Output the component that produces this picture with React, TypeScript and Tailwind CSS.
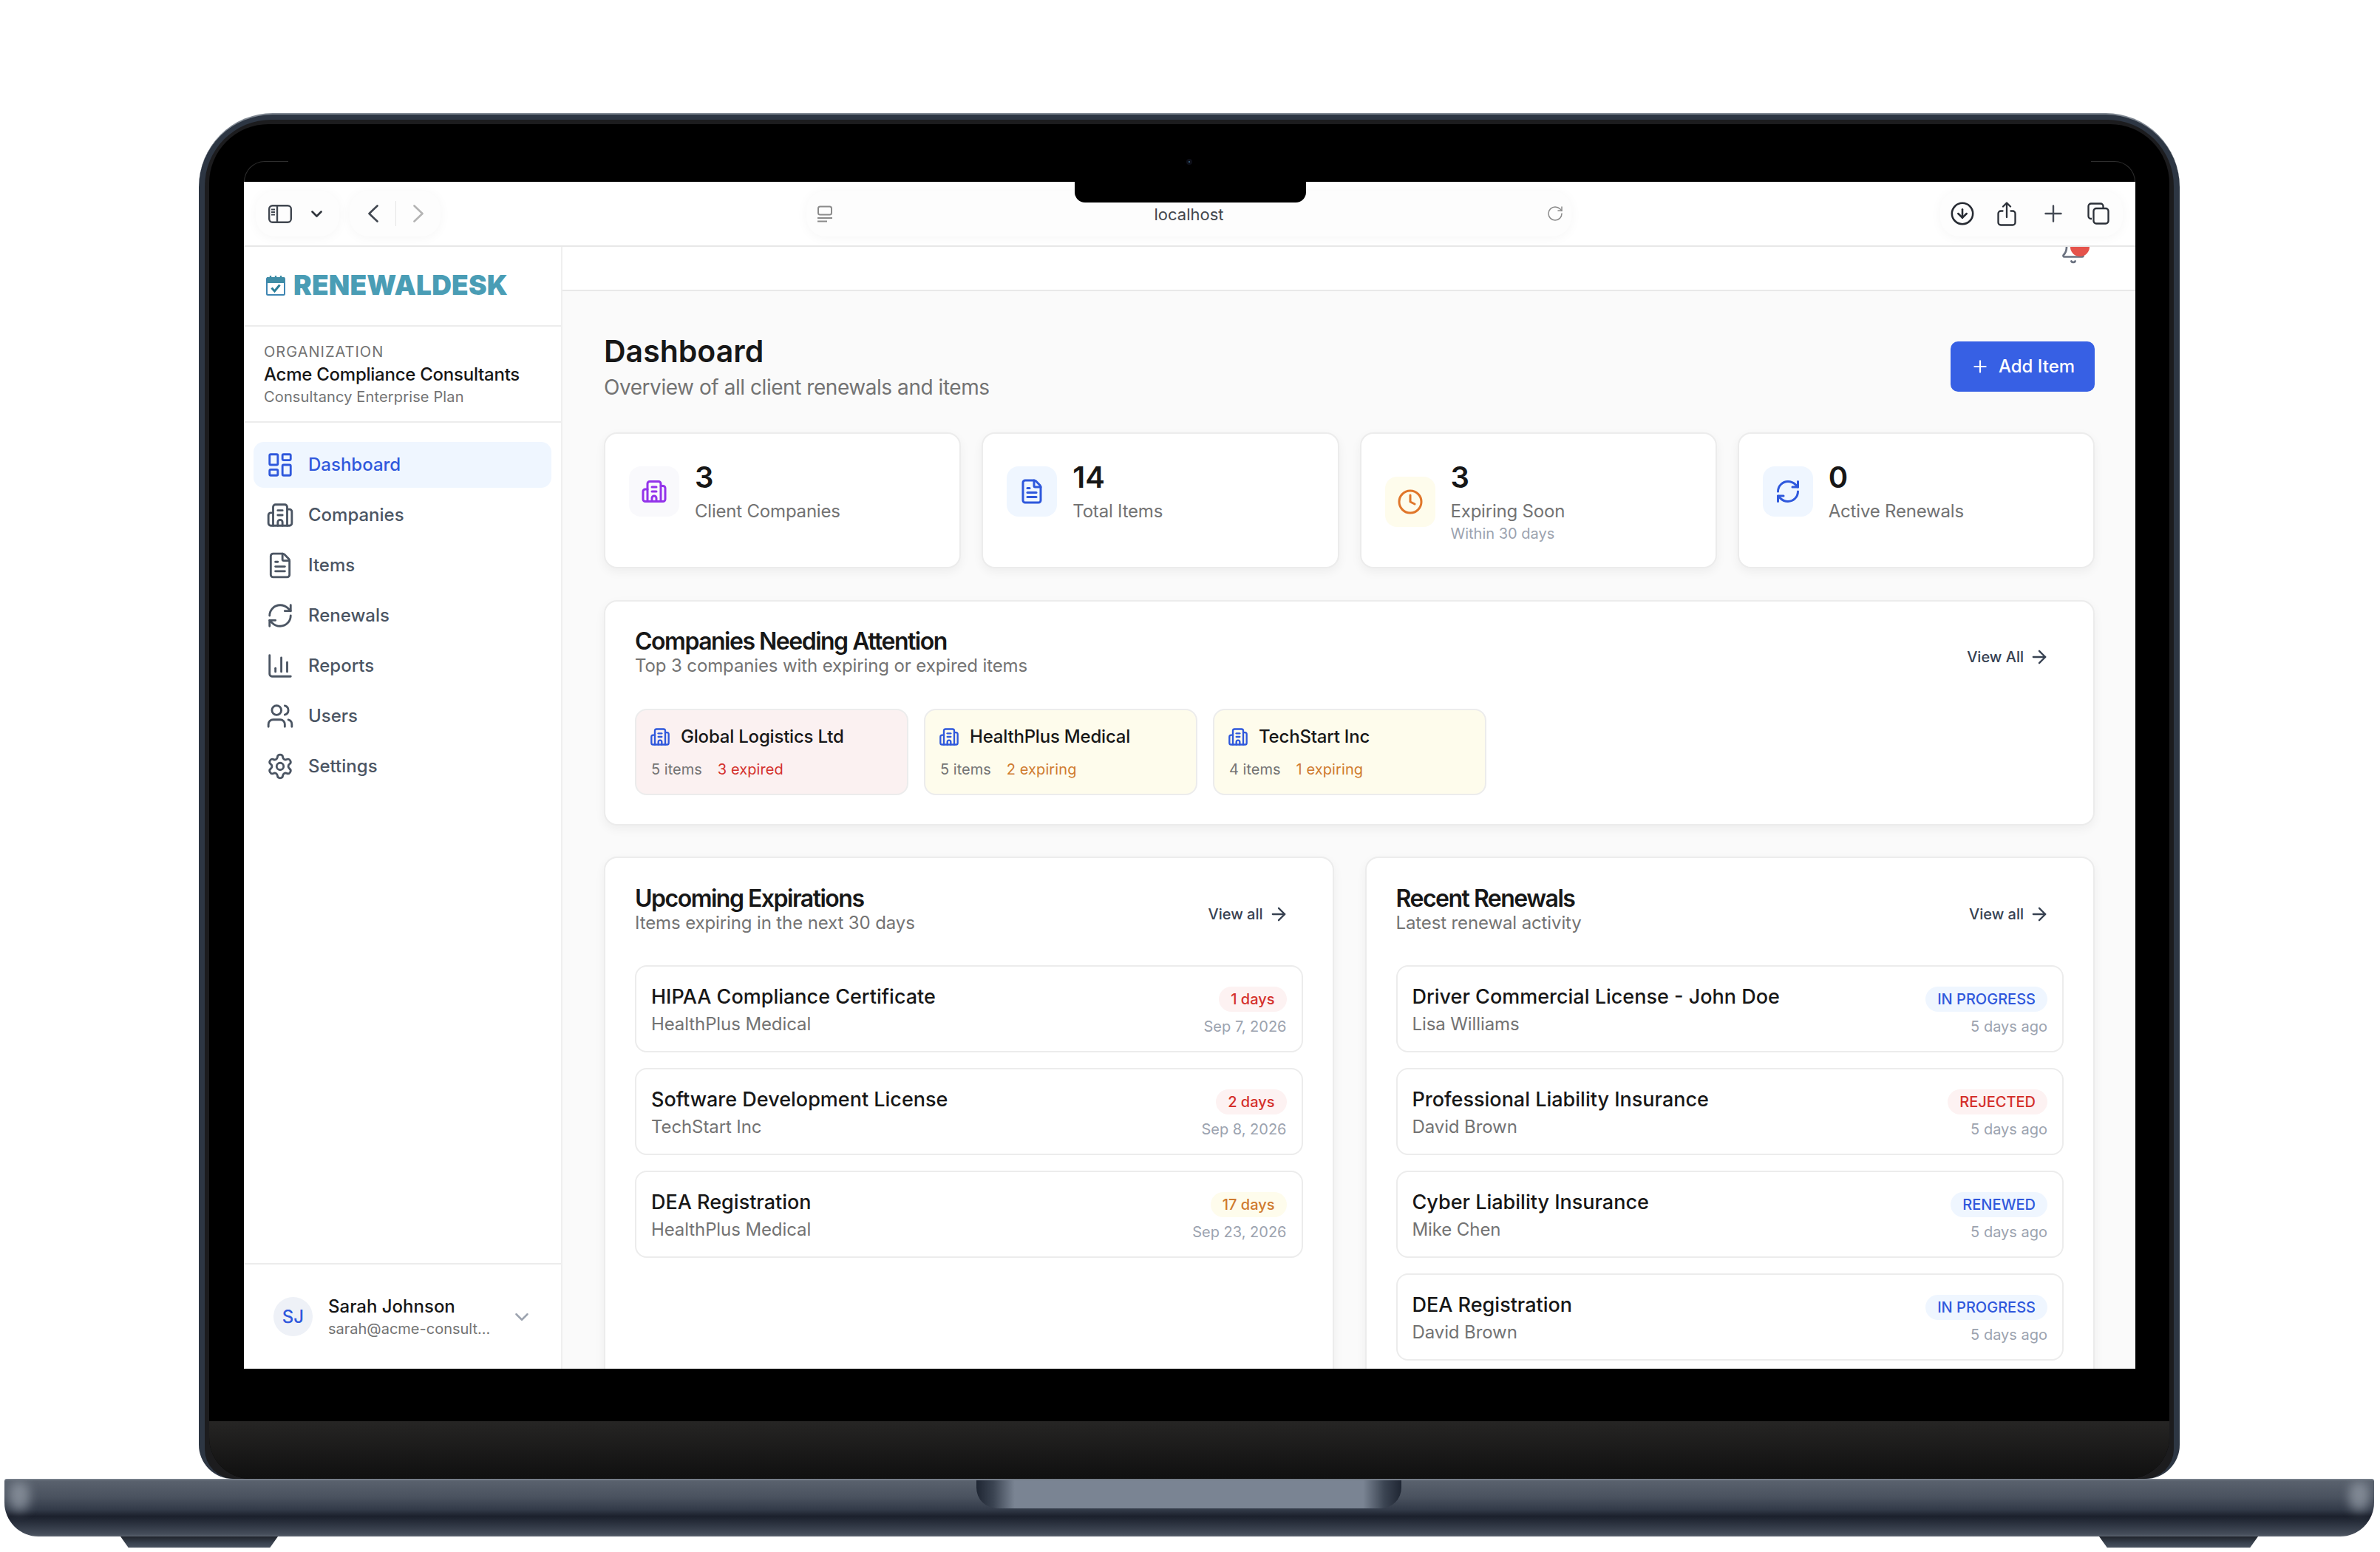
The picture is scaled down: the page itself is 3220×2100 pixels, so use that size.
import React from "react";
import {
  ArrowRight,
  Bell,
  Building2,
  ChartColumn,
  ChevronDown,
  CircleArrowDown,
  Clock,
  FileText,
  LayoutDashboard,
  Plus,
  RefreshCw,
  RotateCw,
  Settings,
  Users,
} from "lucide-react";

const nav = [
  { label: "Dashboard", Icon: LayoutDashboard, active: true },
  { label: "Companies", Icon: Building2 },
  { label: "Items", Icon: FileText },
  { label: "Renewals", Icon: RefreshCw },
  { label: "Reports", Icon: ChartColumn },
  { label: "Users", Icon: Users },
  { label: "Settings", Icon: Settings },
];

const upcoming = [
  { t: "HIPAA Compliance Certificate", s: "HealthPlus Medical", b: "1 days", d: "Sep 7, 2026", c: "red" },
  { t: "Software Development License", s: "TechStart Inc", b: "2 days", d: "Sep 8, 2026", c: "red" },
  { t: "DEA Registration", s: "HealthPlus Medical", b: "17 days", d: "Sep 23, 2026", c: "amber" },
];

const renewals = [
  { t: "Driver Commercial License - John Doe", s: "Lisa Williams", b: "IN PROGRESS", d: "5 days ago", c: "blue" },
  { t: "Professional Liability Insurance", s: "David Brown", b: "REJECTED", d: "5 days ago", c: "red" },
  { t: "Cyber Liability Insurance", s: "Mike Chen", b: "RENEWED", d: "5 days ago", c: "blue" },
  { t: "DEA Registration", s: "David Brown", b: "IN PROGRESS", d: "5 days ago", c: "blue" },
];

const badgeClass: Record<string, string> = {
  red: "bg-[#fdf2f2] text-[#d4302b]",
  amber: "bg-[#fefcec] text-[#cf7a2e]",
  blue: "bg-[#eff6ff] text-[#2f58dc]",
};

function Card({ children, className = "" }: { children: React.ReactNode; className?: string }) {
  return (
    <div className={"bg-white border-2 border-[#ececec] rounded-[18px] shadow-[0_5px_14px_rgba(0,0,0,0.05)] " + className}>
      {children}
    </div>
  );
}

function SectionHead({ title, sub, link }: { title: string; sub: string; link: string }) {
  return (
    <div className="flex items-center justify-between">
      <div>
        <div className="text-[32px] leading-[35px] font-semibold tracking-[-1.5px] text-[#171717]">{title}</div>
        <div className="text-[24px] leading-[32px] tracking-[-0.12px] text-[#737373]">{sub}</div>
      </div>
      <div className="flex items-center gap-[7px] pr-[19px] pt-[10px] text-[20px] font-medium text-[#374151]">
        <span>{link}</span>
        <ArrowRight className="w-[28px] h-[28px]" />
      </div>
    </div>
  );
}

function Row({ r }: { r: { t: string; s: string; b: string; d: string; c: string } }) {
  return (
    <div className="h-[118px] border-2 border-[#ececec] rounded-[16px] bg-white px-[20px] pt-[23px] flex items-start justify-between shrink-0">
      <div>
        <div className="text-[27px] leading-[36px] font-medium text-[#171717]">{r.t}</div>
        <div className="mt-[3px] text-[24px] leading-[32px] tracking-[-0.1px] text-[#737373]">{r.s}</div>
      </div>
      <div className="pt-[4px] flex flex-col items-end">
        <div className={"h-[34px] px-[16px] rounded-full text-[20px] leading-[34px] font-medium " + badgeClass[r.c]}>{r.b}</div>
        <div className="mt-[6px] text-[20px] leading-[28px] text-[#9ca3af]">{r.d}</div>
      </div>
    </div>
  );
}

function Stat({ n, label, sub, Icon, box, color }: { n: string; label: string; sub?: string; Icon: any; box: string; color: string }) {
  return (
    <Card className="pt-[35px] px-[32px] pb-[31px] flex items-center gap-[21px] self-stretch">
      <div className="self-start flex w-full items-center gap-[21px]">
        <div className={"w-[68px] h-[68px] rounded-[16px] flex items-center justify-center shrink-0 " + box}>
          <Icon className={"w-[36px] h-[36px] " + color} />
        </div>
        <div>
          <div className="text-[40px] leading-[48px] font-semibold text-[#171717]">{n}</div>
          <div className="mt-[6px] text-[24px] leading-[32px] tracking-[-0.2px] text-[#737373]">{label}</div>
          {sub && <div className="text-[20px] leading-[28px] text-[#9ca3af]">{sub}</div>}
        </div>
      </div>
    </Card>
  );
}

function Chip({ name, items, alert, bg, color }: { name: string; items: string; alert: string; bg: string; color: string }) {
  return (
    <div className={"w-[370px] border-2 border-[#ececec] rounded-[16px] p-[20px] pb-[19px] " + bg}>
      <div className="flex items-center gap-[14px] -ml-[2px] text-[24px] leading-[32px] tracking-[-0.2px] font-medium text-[#171717]">
        <Building2 className="w-[28px] h-[28px] text-[#2f58dc]" />
        <span>{name}</span>
      </div>
      <div className="mt-[14px] flex gap-[21px] text-[20px] leading-[28px]">
        <span className="text-[#737373]">{items}</span>
        <span className={"tracking-[0.1px] " + color}>{alert}</span>
      </div>
    </div>
  );
}

function Toolbar() {
  const pill = "h-[62px] rounded-[26px] bg-[#fdfdfd] shadow-[0_2px_16px_rgba(0,0,0,0.04)] flex items-center";
  return (
    <div className="h-[88px] shrink-0 bg-white border-b-2 border-[#e8e8e8] pl-[16px] pr-[17px] flex items-center justify-between">
      <div className="flex gap-[14px]">
        <div className={pill + " w-[113px] pl-[17px] gap-[26px]"}>
          <svg width="32" height="25" viewBox="0 0 32 25" fill="none" stroke="#414750" strokeWidth="2.4">
            <rect x="1.2" y="1.2" width="29.6" height="22.6" rx="4.5" />
            <path d="M12 1.2v22.6" />
            <path d="M4 6.5h5M4 10h5M4 13.5h5" strokeWidth="1.8" />
          </svg>
          <svg width="15" height="9" viewBox="0 0 15 9" fill="none" stroke="#30353c" strokeWidth="2.6" strokeLinecap="round" strokeLinejoin="round">
            <path d="M1.5 1.5 7.5 7.5 13.5 1.5" />
          </svg>
        </div>
        <div className={pill + " w-[123px] pl-[25px]"}>
          <svg width="14" height="24" viewBox="0 0 14 24" fill="none" stroke="#414750" strokeWidth="2.6" strokeLinecap="round" strokeLinejoin="round">
            <path d="M12.5 1.5 1.5 12l11 10.5" />
          </svg>
          <div className="w-[1px] h-[34px] bg-[#e6e6e6] mx-[23px]" />
          <svg width="14" height="24" viewBox="0 0 14 24" fill="none" stroke="#b4b4b4" strokeWidth="2.6" strokeLinecap="round" strokeLinejoin="round">
            <path d="M1.5 1.5 12.5 12 1.5 22.5" />
          </svg>
        </div>
      </div>
      <div className={pill + " w-[1035px] mr-[4px] px-[14px] grid grid-cols-[1fr_auto_1fr]"}>
        <svg width="22" height="23" viewBox="0 0 22 23" fill="none" stroke="#8a8a8a" strokeWidth="2">
          <rect x="2" y="1.5" width="18" height="11" rx="2.5" />
          <path d="M1 17h20M1 21.5h13" />
        </svg>
        <span className="mt-[1px] text-[22px] leading-[28px] text-[#44474d]">localhost</span>
        <RotateCw className="justify-self-end w-[24px] h-[24px] text-[#8a8a8a] -mr-[4px]" strokeWidth={1.5} />
      </div>
      <div className={pill + " w-[247px] pl-[13px]"}>
        <CircleArrowDown className="w-[34px] h-[34px] text-[#272b33]" strokeWidth={1.8} />
        <svg className="ml-[30px]" width="26" height="33" viewBox="0 0 26 33" fill="none" stroke="#2b3038" strokeWidth="2.3" strokeLinecap="round" strokeLinejoin="round">
          <path d="M7.5 12.5H5a3.5 3.5 0 0 0-3.5 3.5v12A3.5 3.5 0 0 0 5 31.5h16a3.5 3.5 0 0 0 3.5-3.5V16a3.5 3.5 0 0 0-3.5-3.5h-2.5" />
          <path d="M13 21V2M8 6.5l5-5 5 5" />
        </svg>
        <svg className="ml-[38px]" width="24" height="24" viewBox="0 0 24 24" fill="none" stroke="#454b55" strokeWidth="2.4" strokeLinecap="round">
          <path d="M12 1.5v21M1.5 12h21" />
        </svg>
        <svg className="ml-[34px]" width="30" height="30" viewBox="0 0 30 30" fill="none" stroke="#2b3038" strokeWidth="2.3" strokeLinejoin="round">
          <path d="M6 22h-1a3.5 3.5 0 0 1-3.5-3.5V5A3.5 3.5 0 0 1 5 1.5h13A3.5 3.5 0 0 1 21.5 5v2" />
          <rect x="8.5" y="8" width="20" height="20.5" rx="3.5" />
        </svg>
      </div>
    </div>
  );
}

function Sidebar() {
  return (
    <aside className="w-[431px] shrink-0 bg-white border-r-2 border-[#efefef] flex flex-col">
      <div className="h-[108px] shrink-0 border-b-2 border-[#ececec] pl-[30px] pb-[2px] flex items-center gap-[11px]">
        <svg width="26" height="28" viewBox="0 0 26 28" fill="none">
          <rect x="1" y="4" width="24" height="23" rx="1.5" fill="#fff" stroke="#3f86b3" strokeWidth="2" />
          <rect x="1" y="3" width="24" height="8" fill="#3f8da6" />
          <path d="M6 1v5M13 1v5M20 1v5" stroke="#3f8da6" strokeWidth="2.4" />
          <path d="M7.5 17.5 11.5 22 18.5 13.5" stroke="#2b7f99" strokeWidth="3" />
        </svg>
        <span className="text-[37px] leading-[40px] font-black text-[#4a9db5] tracking-[0.2px]">RENEWALDESK</span>
      </div>
      <div className="shrink-0 border-b-2 border-[#ececec] pl-[27px] pt-[20px] pb-[19px]">
        <div className="text-[20px] leading-[28px] text-[#737373] tracking-[1px]">ORGANIZATION</div>
        <div className="mt-[1px] text-[24px] leading-[32px] tracking-[-0.25px] font-medium text-[#171717]">Acme Compliance Consultants</div>
        <div className="text-[20px] leading-[28px] tracking-[0.15px] text-[#737373]">Consultancy Enterprise Plan</div>
      </div>
      <nav className="flex-1 pt-[26px] pl-[13px] pr-[13px] flex flex-col gap-[6px]">
        {nav.map(({ label, Icon, active }) => (
          <div
            key={label}
            className={
              "h-[62px] rounded-[14px] pl-[17px] flex items-center gap-[19px] text-[24px] font-medium " +
              (active ? "bg-[#eff6ff] text-[#2f58dc]" : "text-[#4b5563]")
            }
          >
            <Icon className="w-[38px] h-[38px]" strokeWidth={1.8} />
            <span>{label}</span>
          </div>
        ))}
      </nav>
      <div className="h-[143px] shrink-0 border-t-2 border-[#ececec] pl-[40px] pr-[38px] flex items-center">
        <div className="w-[53px] h-[53px] rounded-full bg-[#eef1f7] flex items-center justify-center text-[24px] font-medium text-[#2f58dc]">SJ</div>
        <div className="ml-[21px]">
          <div className="text-[24px] leading-[32px] font-medium text-[#171717]">Sarah Johnson</div>
          <div className="text-[20px] leading-[28px] text-[#737373]">sarah@acme-consult...</div>
        </div>
        <ChevronDown className="ml-auto w-[30px] h-[30px] text-[#9ca3af]" />
      </div>
    </aside>
  );
}

function Main() {
  return (
    <div className="flex-1 min-w-0 flex flex-col overflow-hidden">
      <div className="h-[60px] shrink-0 bg-white border-b-2 border-[#e8e8e8] overflow-hidden flex justify-end pr-[66px]">
        <div className="relative w-[36px] h-[36px] -mt-[12px]">
          <Bell className="w-[36px] h-[36px] text-[#6b7280]" strokeWidth={1.8} />
          <div className="absolute left-[14px] -top-[1px] w-[26px] h-[26px] rounded-full bg-[#e5534b]" />
        </div>
      </div>
      <main className="flex-1 min-h-0 overflow-hidden bg-[#fafafa] pl-[56px] pr-[55px] pt-[55px]">
        <div className="flex items-center justify-between">
          <div>
            <div className="text-[41px] leading-[52px] font-semibold text-[#171717]">Dashboard</div>
            <div className="mt-[5px] text-[28px] leading-[36px] tracking-[-0.45px] text-[#737373]">Overview of all client renewals and items</div>
          </div>
          <div className="w-[195px] h-[68px] rounded-[10px] bg-[#3760e4] text-white flex items-center justify-center gap-[12px] text-[24px] font-medium">
            <Plus className="w-[26px] h-[26px]" />
            <span>Add Item</span>
          </div>
        </div>
        <div className="mt-[43px] grid grid-cols-4 gap-[28px]">
          <Stat n="3" label="Client Companies" Icon={Building2} box="bg-[#f9f9fc]" color="text-[#9333ea]" />
          <Stat n="14" label="Total Items" Icon={FileText} box="bg-[#eff6ff]" color="text-[#2f58dc]" />
          <Stat n="3" label="Expiring Soon" sub="Within 30 days" Icon={Clock} box="bg-[#fefcec]" color="text-[#e0762a]" />
          <Stat n="0" label="Active Renewals" Icon={RefreshCw} box="bg-[#eff6ff]" color="text-[#2f58dc]" />
        </div>
        <Card className="mt-[43px] pt-[36px] px-[40px] pb-[39px]">
          <SectionHead title="Companies Needing Attention" sub="Top 3 companies with expiring or expired items" link="View All" />
          <div className="mt-[42px] flex gap-[21px]">
            <Chip name="Global Logistics Ltd" items="5 items" alert="3 expired" bg="bg-[#fbf1f1]" color="text-[#d4302b]" />
            <Chip name="HealthPlus Medical" items="5 items" alert="2 expiring" bg="bg-[#fefcec]" color="text-[#cf7a2e]" />
            <Chip name="TechStart Inc" items="4 items" alert="1 expiring" bg="bg-[#fefcec]" color="text-[#cf7a2e]" />
          </div>
        </Card>
        <div className="mt-[42px] grid grid-cols-2 gap-[42px]">
          <Card className="pt-[37px] px-[40px] h-[760px] overflow-hidden">
            <SectionHead title="Upcoming Expirations" sub="Items expiring in the next 30 days" link="View all" />
            <div className="mt-[41px] flex flex-col gap-[21px]">
              {upcoming.map((r) => (
                <Row key={r.t} r={r} />
              ))}
            </div>
          </Card>
          <Card className="pt-[37px] px-[40px] h-[760px] overflow-hidden">
            <SectionHead title="Recent Renewals" sub="Latest renewal activity" link="View all" />
            <div className="mt-[41px] flex flex-col gap-[21px]">
              {renewals.map((r) => (
                <Row key={r.t + r.s} r={r} />
              ))}
            </div>
          </Card>
        </div>
      </main>
    </div>
  );
}

export default function App() {
  return (
    <div className="w-[3220px] h-[2100px] overflow-hidden bg-white pt-[153px] font-['Inter','Liberation_Sans',sans-serif]">
      {/* lid */}
      <div className="ml-[269px] w-[2680px] h-[1848px] rounded-t-[100px] rounded-b-[46px] bg-[#2d3643] border-t-2 border-[#7f8791] pt-[7px] px-[8px] overflow-hidden">
        <div className="h-full rounded-t-[90px] rounded-b-[40px] bg-[#1c1c1e] pt-[6px] px-[6px]">
          <div className="h-full rounded-t-[80px] rounded-b-[56px] bg-black overflow-hidden flex flex-col pt-[78px]">
            <div className="relative ml-[47px] w-[2559px] h-[1606px] shrink-0 bg-white flex flex-col">
              <div className="absolute left-0 -top-[28px] w-[60px] h-[28px] border-l border-t border-[#2e2e2e] rounded-tl-[30px]" />
              <div className="absolute right-0 -top-[28px] w-[60px] h-[28px] border-r border-t border-[#2e2e2e] rounded-tr-[30px]" />
              <div className="absolute left-[1124px] top-0 z-10 w-[313px] h-[28px] rounded-b-[14px] bg-black" />
              <div className="absolute left-[1275px] -top-[31px] w-[8px] h-[8px] rounded-full bg-[#0d0f18] flex items-center justify-center">
                <div className="w-[2px] h-[2px] rounded-full bg-[#3d6f8f]" />
              </div>
              <Toolbar />
              <div className="flex-1 min-h-0 flex overflow-hidden">
                <Sidebar />
                <Main />
              </div>
            </div>
            <div className="mt-[71px] flex-1 bg-gradient-to-b from-[#262524] to-[#101010]" />
          </div>
        </div>
      </div>
      {/* base */}
      <div className="relative ml-[6px] w-[3206px] h-[78px] rounded-t-[3px] rounded-b-[46px] overflow-hidden border-t-2 border-[#757d88] bg-[linear-gradient(180deg,#5a626e_0%,#4a525f_30%,#333b49_52%,#1b202c_64%,#2c3340_78%,#464e5b_96%,#59616d_100%)]">
        <div className="absolute left-[6px] top-[2px] w-[28px] h-[40px] rounded-full bg-[#a3abb6] opacity-60 blur-[7px]" />
        <div className="absolute right-[6px] top-[2px] w-[28px] h-[40px] rounded-full bg-[#a3abb6] opacity-60 blur-[7px]" />
        <div className="absolute left-[1315px] -top-[2px] w-[575px] h-[40px] rounded-b-[28px] bg-[linear-gradient(90deg,#1f2633_0%,#3b4452_4%,#7a8493_9%,#7a8493_91%,#3b4452_96%,#1f2633_100%)]" />
      </div>
      {/* feet */}
      <div className="flex justify-between pl-[163px] pr-[165px]">
        <div className="w-[213px] h-[15px] bg-[linear-gradient(180deg,#20242c_0%,#3a4350_60%,#4a5361_100%)] [clip-path:polygon(0_0,100%_0,95%_100%,5%_100%)]" />
        <div className="w-[215px] h-[15px] bg-[linear-gradient(180deg,#20242c_0%,#3a4350_60%,#4a5361_100%)] [clip-path:polygon(0_0,100%_0,95%_100%,5%_100%)]" />
      </div>
    </div>
  );
}
